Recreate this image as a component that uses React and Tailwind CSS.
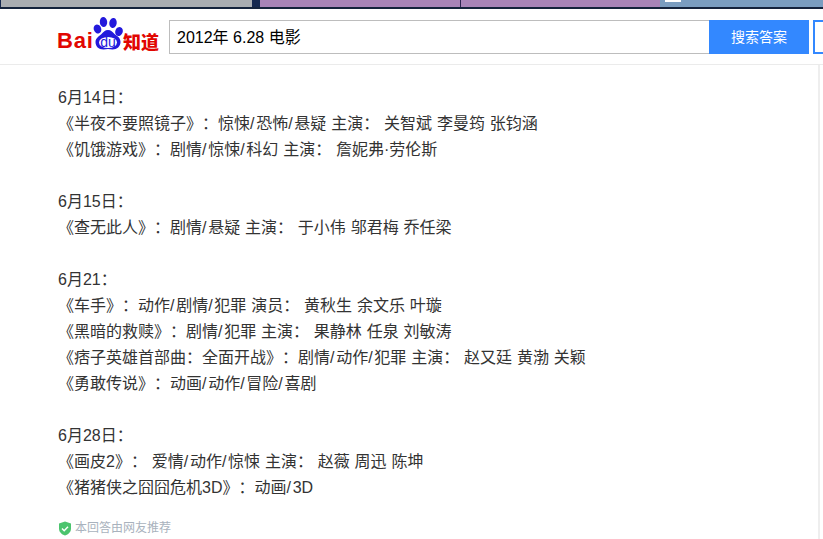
const SANS = 'font-["Liberation_Sans","Noto_Sans_CJK_SC",sans-serif]';

const GROUPS = [
  {
    date: '6月14日：',
    lines: ['《半夜不要照镜子》：惊悚/恐怖/悬疑 主演： 关智斌 李曼筠 张钧涵', '《饥饿游戏》：剧情/惊悚/科幻 主演： 詹妮弗·劳伦斯'],
  },
  {
    date: '6月15日：',
    lines: ['《查无此人》：剧情/悬疑 主演： 于小伟 邬君梅 乔任梁'],
  },
  {
    date: '6月21：',
    lines: [
      '《车手》：动作/剧情/犯罪 演员： 黄秋生 余文乐 叶璇',
      '《黑暗的救赎》：剧情/犯罪 主演： 果静林 任泉 刘敏涛',
      '《痞子英雄首部曲：全面开战》：剧情/动作/犯罪 主演： 赵又廷 黄渤 关颖',
      '《勇敢传说》：动画/动作/冒险/喜剧',
    ],
  },
  {
    date: '6月28日：',
    lines: ['《画皮2》： 爱情/动作/惊悚 主演： 赵薇 周迅 陈坤', '《猪猪侠之囧囧危机3D》：动画/3D'],
  },
];

function BaiduLogo() {
  return (
    <div className="flex items-start w-[103px] h-[36px] shrink-0">
      <span className="w-[36px] mt-[13px] text-[22px] leading-[24px] font-bold text-[#e10601] tracking-[0.8px]">Bai</span>
      <div className="relative w-[31px] h-[36px] shrink-0">
        <svg viewBox="0 0 31 36" className="w-[31px] h-[36px]" fill="#2319dc">
          <ellipse cx="4.500" cy="13" rx="3.700" ry="4.600" transform="rotate(-20 4.500 13)" />
          <ellipse cx="10.500" cy="6" rx="3.700" ry="5" transform="rotate(-6 10.500 6)" />
          <ellipse cx="20" cy="7" rx="3.700" ry="5" transform="rotate(10 20 7)" />
          <ellipse cx="26" cy="15.500" rx="3.700" ry="4.600" transform="rotate(20 26 15.500)" />
          <path d="M15 14c3 0 4.500 2 6.500 4 2.500 2 6 3.500 6 8 0 4.500-3.500 7.500-8 7.500-1.500 0-3-.5-4.500-.5s-3 .5-4.500.5c-5 0-8-3-8-7.500 0-4 4-6 6-8 2-2 3.500-4 6.500-4z" />
          <ellipse cx="15" cy="26.500" rx="9" ry="5.500" fill="#fff" />
        </svg>
        <span className="absolute left-[4px] top-[19px] w-[22px] text-center text-[14px] leading-[14px] text-[#2319dc]">du</span>
      </div>
      <span className='-ml-[1px] mt-[13px] text-[18px] leading-[24px] font-black text-[#e10601] font-["Noto_Sans_CJK_SC",sans-serif]'>知道</span>
    </div>
  );
}

function MovieLine({ text }) {
  const parts = text.split('/');
  return (
    <div className="whitespace-nowrap [word-spacing:0.4px]">
      {parts.map((part, i) => (
        <span key={i}>
          {part}
          {i < parts.length - 1 && <span className="tracking-[1.7px]">/</span>}
        </span>
      ))}
    </div>
  );
}

export default function App() {
  return (
    <div className={`h-[539px] overflow-hidden bg-white [text-spacing-trim:space-all] ${SANS}`}>
      {/* strip of the window behind the page */}
      <div className="flex h-[9px] border-b-2 border-[#14233c]">
        <div className="w-[252px] bg-[#a9adb1] border-l border-[#15284f]" />
        <div className="w-[8px] bg-[#15284f]" />
        <div className="w-[200px] bg-[#a884b8]" />
        <div className="w-[200px] bg-[#a884b8] border-l border-[#2c2350]" />
        <div className="flex-1 bg-[#7a9dc0] pl-[5px]">
          <div className="w-[16px] h-[2px] bg-white" />
        </div>
      </div>

      {/* search bar */}
      <div className="flex items-start h-[56px] border-b border-[#ebebeb] pl-[57px] pt-[7px]">
        <BaiduLogo />
        <div className="flex items-center w-[540px] h-[34px] mt-[4px] ml-[9px] border border-r-0 border-[#bdbdbd] pl-[7px] pt-[1px] text-[16px] text-black">
          2012年 6.28 电影
        </div>
        <div className="flex items-center justify-center w-[100px] h-[34px] mt-[4px] pb-[1px] bg-[#3388ff] text-[14px] text-white font-['Noto_Sans_CJK_SC',sans-serif]">
          搜索答案
        </div>
        <div className="w-[10px] h-[34px] mt-[4px] ml-[4px] border-2 border-r-0 border-[#3388ff]" />
      </div>

      <div className="flex h-[474px]">
        <div className="flex-1 pl-[58px] pt-[20px] text-[16px] leading-[26px] text-[#333333]">
          {GROUPS.map(group => (
            <div key={group.date} className="mb-[26px]">
              <div>{group.date}</div>
              {group.lines.map(line => (
                <MovieLine key={line} text={line} />
              ))}
            </div>
          ))}
          <div className="flex items-center gap-[3px] -mt-[7px] text-[12px] leading-[16px] text-[#a9b2bd]">
            <svg viewBox="0 0 14 15" className="w-[14px] h-[15px]">
              <path d="M7 0.500l6 2v5c0 3.500-2.500 5.800-6 7-3.500-1.200-6-3.500-6-7v-5z" fill="#4cc46e" />
              <path d="M4 7.500l2.200 2.200L10 5.800" fill="none" stroke="#fff" strokeWidth="1.500" />
            </svg>
            本回答由网友推荐
          </div>
        </div>
        <div className="w-[2px] mr-[3px] bg-[#eeeeee]" />
      </div>
    </div>
  );
}
